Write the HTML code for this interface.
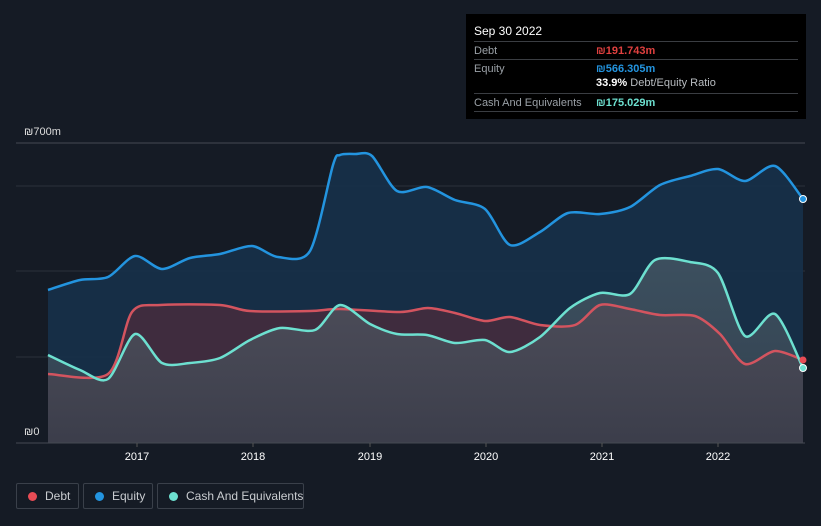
<!DOCTYPE html>
<html><head><meta charset="utf-8"><style>
body{margin:0;background:#151b25;width:821px;height:526px;overflow:hidden;font-family:"Liberation Sans",sans-serif;}
.tt{position:absolute;left:466px;top:14px;width:340px;height:105px;background:#000;color:#fff;font-size:11px}
.tt .h{position:absolute;left:8px;top:10px;font-size:12px}
.row{position:absolute;left:8px;width:324px;height:17px;border-top:1px solid #3a3d42;}
.row span{position:absolute;top:3px;white-space:nowrap}
.l{left:0;color:#9aa0a6}.v{left:122px;font-weight:bold}
.leg{position:absolute;top:483px;height:26px;border:1px solid #3a404a;border-radius:2px;color:#c9ccd0;font-size:12px;box-sizing:border-box;white-space:nowrap}
.leg i{position:absolute;left:11px;top:8px;width:9px;height:9px;border-radius:50%}
.leg span{position:absolute;left:28px;top:5px}
</style></head><body>
<svg width="821" height="526" style="position:absolute;left:0;top:0">
<defs>
<linearGradient id="g" x1="0" y1="0" x2="0" y2="1"><stop offset="0" stop-color="#5b6a72" stop-opacity=".55"/><stop offset="1" stop-color="#3a4550" stop-opacity=".7"/></linearGradient>
</defs>
<line x1="16" y1="143" x2="805" y2="143" stroke="#454a52"/>
<line x1="16" y1="186" x2="805" y2="186" stroke="#2a303a"/>
<line x1="16" y1="271" x2="805" y2="271" stroke="#2a303a"/>
<line x1="16" y1="357" x2="805" y2="357" stroke="#2a303a"/>
<path id="ef" fill="#16314a" opacity=".9"/>
<path id="df" fill="#4a2c3c" opacity=".8"/>
<path id="cf" fill="url(#g)"/>
<path id="el" fill="none" stroke="#2394df" stroke-width="2.5"/>
<path id="dl" fill="none" stroke="#d3545f" stroke-width="2.5"/>
<path id="cl" fill="none" stroke="#6de0d0" stroke-width="2.5"/>
<line x1="16" y1="443" x2="805" y2="443" stroke="#454a52"/>
<g stroke="#555" ><line x1="137" y1="443" x2="137" y2="447"/><line x1="253" y1="443" x2="253" y2="447"/><line x1="370" y1="443" x2="370" y2="447"/><line x1="486" y1="443" x2="486" y2="447"/><line x1="602" y1="443" x2="602" y2="447"/><line x1="718" y1="443" x2="718" y2="447"/></g>
<g fill="#fff" font-size="11" text-anchor="middle"><text x="137" y="460">2017</text><text x="253" y="460">2018</text><text x="370" y="460">2019</text><text x="486" y="460">2020</text><text x="602" y="460">2021</text><text x="718" y="460">2022</text></g>
<rect x="16" y="424" width="32" height="18" fill="#151b25"/>
<g fill="#ddd" font-size="11"><text x="24" y="135">₪700m</text><text x="24" y="435">₪0</text></g>
<circle cx="803" cy="199" r="3.5" fill="#2394df" stroke="#fff" stroke-width="1"/>
<circle cx="803" cy="360" r="3.5" fill="#e84c55"/>
<circle cx="803" cy="368" r="3.5" fill="#6de0d0" stroke="#fff" stroke-width="1"/>
</svg>
<div class="tt"><div class="h">Sep 30 2022</div>
<div class="row" style="top:27px"><span class="l">Debt</span><span class="v" style="color:#e0403f">₪191.743m</span></div>
<div class="row" style="top:45px"><span class="l">Equity</span><span class="v" style="color:#2394df">₪566.305m</span></div>
<div style="position:absolute;left:130px;top:63px"><b>33.9%</b> <span style="color:#b8bcc0">Debt/Equity Ratio</span></div>
<div class="row" style="top:79px"><span class="l">Cash And Equivalents</span><span class="v" style="color:#6de0d0">₪175.029m</span></div>
<div class="row" style="top:97px;height:0"></div>
</div>
<div class="leg" style="left:16px;width:63px"><i style="background:#e84c55"></i><span>Debt</span></div>
<div class="leg" style="left:83px;width:70px"><i style="background:#2394df"></i><span>Equity</span></div>
<div class="leg" style="left:157px;width:147px"><i style="background:#6de0d0"></i><span>Cash And Equivalents</span></div>
<script>
function sm(p){let d="M"+p[0][0]+","+p[0][1];for(let i=0;i<p.length-1;i++){const a=p[i-1]||p[i],b=p[i],c=p[i+1],e=p[i+2]||c;const t=.14;d+=" C"+(b[0]+(c[0]-a[0])*t)+","+(b[1]+(c[1]-a[1])*t)+" "+(c[0]-(e[0]-b[0])*t)+","+(c[1]-(e[1]-b[1])*t)+" "+c[0]+","+c[1];}return d;}
const E=[[48,290],[80,280],[108,277],[135,256],[162,269],[190,258],[220,254],[252,246],[278,257],[310,251],[333,165],[340,155],[355,154],[372,156],[397,191],[427,187],[455,200],[485,209],[510,245],[540,232],[568,213],[600,214],[630,207],[660,185],[690,176],[718,169],[745,181],[775,166],[803,199]];
const D=[[48,374],[108,374],[132,312],[160,305],[220,305],[250,311],[310,311],[340,309],[400,312],[428,308],[455,313],[485,321],[510,317],[540,325],[575,325],[600,305],[630,309],[660,315],[695,316],[720,334],[745,364],[775,351],[803,360]];
const C=[[48,355],[80,370],[108,379],[135,334],[162,363],[190,363],[220,358],[250,340],[280,328],[315,330],[340,305],[370,324],[397,334],[427,335],[455,343],[485,340],[510,352],[540,337],[570,308],[600,293],[630,294],[655,260],[690,262],[718,273],[745,336],[775,314],[803,368]];
const cl=" L803,443 L48,443 Z";
[["e",E],["d",D],["c",C]].forEach(([k,p])=>{const d=sm(p);document.getElementById(k+"l").setAttribute("d",d);document.getElementById(k+"f").setAttribute("d",d+cl);});
</script>
</body></html>
